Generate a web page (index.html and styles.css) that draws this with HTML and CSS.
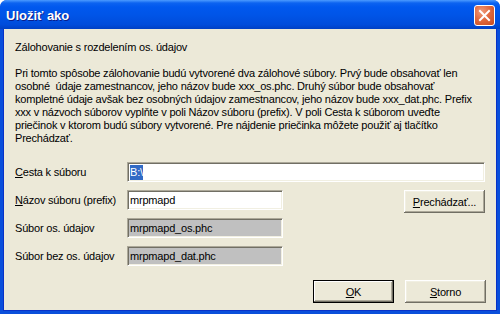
FILE: index.html
```html
<!DOCTYPE html>
<html lang="sk">
<head>
    <meta charset="UTF-8">
    <title>Uložiť ako</title>
    <link rel="stylesheet" href="styles.css">
</head>
<body>
    <div class="window">
        <!-- Title bar -->
        <div class="titlebar">
            <span class="title">Uložiť ako</span>
            <div class="close-btn">
                <svg width="13" height="13" viewBox="0 0 13 13">
                    <path d="M2 2 L11 11 M11 2 L2 11" stroke="#fff" stroke-width="2" stroke-linecap="square"/>
                </svg>
            </div>
        </div>

        <div class="client">
            <p class="heading">Zálohovanie s rozdelením os. údajov</p>
            <p class="info">Pri tomto spôsobe zálohovanie budú vytvorené dva zálohové súbory. Prvý bude obsahovať len<br>
                osobné&nbsp; údaje zamestnancov, jeho názov bude xxx_os.phc. Druhý súbor bude obsahovať<br>
                kompletné údaje avšak bez osobných údajov zamestnancov, jeho názov bude xxx_dat.phc. Prefix<br>
                xxx v názvoch súborov vyplňte v poli Názov súboru (prefix). V poli Cesta k súborom uveďte<br>
                priečinok v ktorom budú súbory vytvorené. Pre nájdenie priečinka môžete použiť aj tlačítko<br>
                Prechádzať.</p>

            <div class="form">
                <label class="lbl"><u>C</u>esta k súboru</label>
                <div class="field wide"><span class="sel">B:\</span></div>

                <label class="lbl"><u>N</u>ázov súboru (prefix)</label>
                <div class="field">mrpmapd</div>
                <div class="btn browse"><u>P</u>rechádzať...</div>

                <label class="lbl">Súbor os. údajov</label>
                <div class="field disabled">mrpmapd_os.phc</div>

                <label class="lbl">Súbor bez os. údajov</label>
                <div class="field disabled">mrpmapd_dat.phc</div>
            </div>

            <div class="footer">
                <div class="btn default"><u>O</u>K</div>
                <div class="btn"><u>S</u>torno</div>
            </div>
        </div>
    </div>
</body>
</html>
```

FILE: styles.css
```css
html, body { margin: 0; height: 100%; background: #fff; }
body { font-family: "Liberation Sans", Arial, sans-serif; font-size: 11px; color: #000; }

.window { height: 314px; display: flex; flex-direction: column; border-radius: 7px 7px 0 0; overflow: hidden;
    background: #0A4FDB; }
.titlebar { height: 29px; flex: none; display: flex; align-items: center; justify-content: space-between; padding: 0 5px 0 6px;
    background: linear-gradient(#4B9BFF 0, #0C63F0 3px, #0058EE 7px, #0055E8 50%, #004CDB 85%, #0040C4 100%); }
.title { color: #fff; font-weight: bold; font-size: 13px; padding-top: 1px; text-shadow: 1px 1px #0A1E8A; }
.close-btn { width: 19px; height: 19px; border: 1px solid #fff; border-radius: 3px; display: flex; align-items: center; justify-content: center;
    background: radial-gradient(circle at 35% 30%, #F09C7C 0, #E06A40 45%, #C84A1E 100%); margin-top: 1px; }

.client { flex: 1; background: #ECE9D8; padding: 12px 10px 0 11px; display: flex; flex-direction: column; letter-spacing: -0.2px;
    border-left: 1px solid #0832C8; border-right: 1px solid #0832C8; border-bottom: 1px solid #0832C8; margin: 0 3px 3px 3px; }

.heading { margin: 0; line-height: 13px; }
.info { margin: 13px 0 0; line-height: 13px; white-space: nowrap; }

.form { display: grid; grid-template-columns: 112px 156px 1fr 82px; grid-template-rows: 20px 20px 20px 20px; row-gap: 8px; margin-top: 17px; }
.lbl { grid-column: 1; align-self: center; line-height: 13px; padding-top: 1px; }
.field { grid-column: 2; background: #fff; line-height: 16px; padding: 0 2px; white-space: nowrap; overflow: hidden;
    border-top: 1px solid #ACA899; border-left: 1px solid #ACA899; border-bottom: 1px solid #fff; border-right: 1px solid #fff;
    box-shadow: inset 1px 1px #716F64, inset -1px -1px #F1EFE2; padding-top: 1px; }
.field.wide { grid-column: 2 / 5; margin-right: 1px; }
.field.disabled { background: #C0C0C0; }
.sel { background: #316AC5; color: #fff; padding: 1px 0 2px; }

.btn { width: 81px; height: 23px; box-sizing: border-box; display: flex; align-items: center; justify-content: center;
    background: #ECE9D8; box-shadow: inset -1px -1px #716F64, inset 1px 1px #fff, inset -2px -2px #ACA899, inset 2px 2px #F1EFE2; }
.btn.browse { grid-column: 4; grid-row: 2; height: 23px; }
.btn.default { border: 1px solid #000; box-shadow: inset -1px -1px #716F64, inset 1px 1px #fff, inset -2px -2px #ACA899; }

.footer { display: flex; justify-content: flex-end; gap: 11px; margin-top: 14px; }
```
